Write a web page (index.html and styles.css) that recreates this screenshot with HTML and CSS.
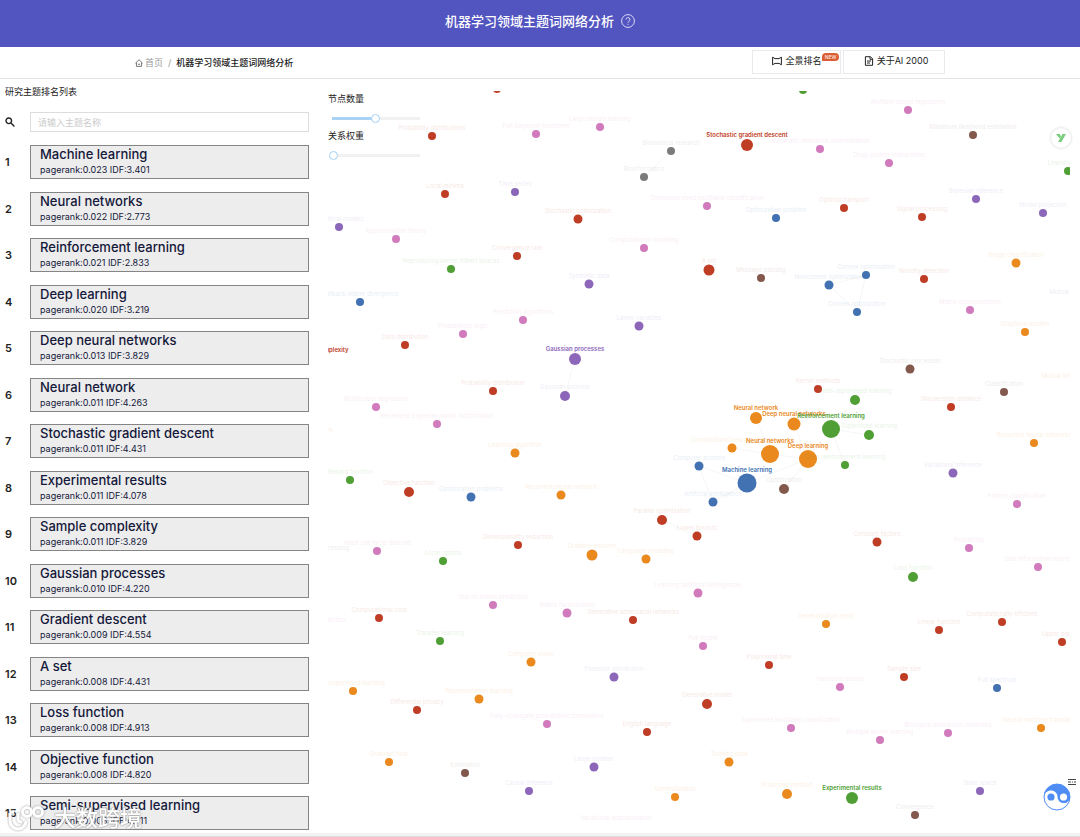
FILE: index.html
```html
<!DOCTYPE html>
<html lang="zh-CN">
<head>
<meta charset="utf-8">
<title>机器学习领域主题词网络分析</title>
<link rel="stylesheet" href="styles.css">
</head>

<body>
<header class="header">
	<h1>机器学习领域主题词网络分析</h1>
	<button type="button" class="help" aria-label="帮助">
		<svg viewBox="0 0 14 14" width="14" height="14"><circle cx="7" cy="7" r="6.4"/><path d="M5 5.6a2 2 0 1 1 2.9 1.8c-.6.3-.9.6-.9 1.3M7 9.8v1"/></svg>
	</button>
</header>
<div class="nav">
	<div class="nav-in">
		<div class="crumb">
			<svg viewBox="0 0 10 10" width="8" height="8"><path d="M.6 5.2L5 .9l4.4 4.3M1.8 4.6v4.6h6.4V4.6M3.6 6.2q1.4 1.5 2.8 0"/></svg>
			<a href="#">首页</a><span>/</span><b>机器学习领域主题词网络分析</b>
		</div>
		<div class="links">
			<a href="#" class="link-all">
				<svg viewBox="0 0 10 10" width="10" height="10"><path d="M.6 1.2L3 2.6h4l2.4-1.4v7.6L7 7.4H3L.6 8.8z"/></svg>全景排名<i class="new">NEW</i>
			</a>
			<a href="#" class="link-about">
				<svg viewBox="0 0 10 10" width="10" height="10"><path d="M1.4.7h5l2.2 2.2v6.4H1.4zM6 .7v2.6h2.6M3 5h4M3 7h3"/></svg>关于AI 2000
			</a>
		</div>
	</div>
</div>
<main class="main">
	<section class="side">
		<h2>研究主题排名列表</h2>
		<div class="search">
			<label for="key" aria-label="搜索"><svg viewBox="0 0 10 10" width="10" height="10"><circle cx="3.8" cy="3.8" r="2.8"/><path d="M6 6l3.4 3.4"/></svg></label>
			<input type="text" id="key" placeholder="请输入主题名称">
		</div>
		<ol class="list" id="list"></ol>
	</section>
	<section class="graph">
		<div class="control">
			<label for="count">节点数量</label>
			<input type="range" id="count" class="half" min="0" max="100" value="50">
			<label for="weight">关系权重</label>
			<input type="range" id="weight" min="0" max="100" value="0">
		</div>
		<svg id="net" class="net" viewBox="328 91 742 739"></svg>
	</section>
</main>
<div class="foot"></div>
<button type="button" class="plugin" aria-label="插件">
	<svg viewBox="0 0 12 10" width="12" height="10"><path d="M1 1h3.800l1.200 2.400L4.600 5.600zM7.500 1H11L6.400 9H3z"/></svg>
</button>
<button type="button" class="menu" aria-label="菜单">
	<svg viewBox="0 0 8 6" width="8" height="6"><path d="M0 .5h8M0 3h3M4 3h1M6 3h2M0 5.5h8"/></svg>
</button>
<button type="button" class="robot" aria-label="助手">
	<svg viewBox="0 0 28 28" width="28" height="28">
		<circle cx="14" cy="14" r="13" fill="#fff" stroke="#4f8df5"/>
		<path d="M1 14a13 13 0 0 1 26 0c0 4-3 6-6 6a6 6 0 0 1-6.500-6C14.500 10 11.500 7.500 8 7.500S1 10 1 14z" fill="#4f8df5"/>
		<circle cx="8" cy="14" r="3.6" fill="#4f8df5"/><circle cx="20.500" cy="14" r="3.6" fill="#fff"/>
	</svg>
</button>
<div class="mark">
	<svg viewBox="0 0 40 28" width="40" height="28"><path d="M4 9v8a8 8 0 0 0 16 0M12 9v6q0 3 4 3M4 8h4"/><circle cx="21" cy="8" r="4.500"/><circle cx="32" cy="8" r="4.500"/></svg>
	<span>大数跨境</span>
</div>
<script src="graph.js"></script>
</body>
</html>
```
FILE: styles.css
```css
*{margin:0; padding:0; box-sizing:border-box; list-style:none;}
body{min-height:100vh; display:flex; flex-direction:column; background:#fff; color:#222; font:9px/14px Inter,"Noto Sans CJK SC",sans-serif;}
a{color:inherit; text-decoration:none;}
button{border:0; background:none; cursor:pointer;}
svg{display:block; fill:none;}

.header{height:47px; display:flex; align-items:center; justify-content:center; gap:7px; padding-bottom:5px; background:#5254c0; color:#fff;}
.header h1{font-size:13px; line-height:20px; font-weight:500;}
.help svg{stroke:#dcdcf8;}

.nav{height:32px; border-bottom:1px solid #e4e4e4;}
.nav-in{width:75%; height:100%; margin:0 auto; display:flex; justify-content:space-between;}
.crumb{display:flex; align-items:center; color:#999;}
.crumb svg{stroke:#555; margin-right:2px;}
.crumb span{margin:0 5px;}
.crumb b{color:#222; font-weight:500;}
.links{display:flex; gap:2px; padding-top:3px;}
.links a{height:24px; display:flex; align-items:center; justify-content:center; gap:3px; position:relative; padding:0 0 2px 4px; border:1px solid #e9e9ee;}
.links svg{stroke:#222;}
.link-all{width:89px;}
.link-about{width:102px;}
.new{position:absolute; top:2px; right:1px; width:17px; height:8px; border-radius:4px 4px 4px 0; background:#dc5d32; color:#fff; font-size:5px; line-height:8px; font-style:normal; text-align:center;}

.main{display:flex; align-items:stretch; padding:5px 10px 0 5px;}
.side{width:304px; flex:none; display:flex; flex-direction:column;}
.side h2{font-size:9px; line-height:16px; font-weight:400;}
.search{display:flex; align-items:center; margin:12px 0 13px;}
.search label{width:25px; flex:none;}
.search svg{stroke:#222; stroke-width:1.4;}
.search input{flex:1; height:20px; padding:0 7px; border:1px solid #ddd; background:#fff; font:inherit; outline:none;}
.search input::placeholder{color:#ccc;}
.list{flex:1; display:flex; flex-direction:column; justify-content:space-between;}
.list li{display:flex; align-items:center;}
.list em{width:25px; flex:none; font-size:11px; font-style:normal; font-weight:600;}
.list a{flex:1; display:block; padding:0 9px 1px; border:1px solid #858585; background:#ededed; color:#14183a;}
.list strong{display:block; font-size:13px; line-height:16px; font-weight:500;}
.list span{display:block; font-size:9px; line-height:15px;}

.graph{flex:1; min-width:0; position:relative; margin-left:19px; padding-top:7px;}
.net{width:100%; height:auto; overflow:hidden;}
.net text{font-size:6px; text-anchor:middle;}
.net .weak{opacity:.13;}
.net .main-word{font-weight:600;}
.net line{stroke:#f0f0f0; stroke-width:.6;}
.control{position:absolute; left:0; top:8px; width:92px; display:flex; flex-direction:column;}
.control label{line-height:14px;}
.control input{-webkit-appearance:none; appearance:none; width:92px; height:9px; margin:8px 0 6px 1px; background:linear-gradient(#f1f1f1,#f1f1f1) 3px 3px/88px 3px no-repeat; outline:none;}
.control .half{background:linear-gradient(#a9d2f7,#a9d2f7) 3px 3px/44px 3px no-repeat,linear-gradient(#f1f1f1,#f1f1f1) 3px 3px/88px 3px no-repeat;}
.control input::-webkit-slider-thumb{-webkit-appearance:none; width:9px; height:9px; border:1px solid #a4d0f8; border-radius:50%; background:#fff;}

.foot{height:4px; margin-top:auto; border-bottom:1px solid #dcdcdc; background:#f1f3f3;}
.plugin{position:fixed; right:9px; top:128px; width:20px; height:20px; border-radius:50%; background:#fff; box-shadow:0 0 3px #ccc; display:flex; align-items:center; justify-content:center;}
.plugin svg{fill:#7bce7f;}
.menu{position:fixed; right:4px; bottom:52px;}
.menu svg{stroke:#444;}
.robot{position:fixed; right:9px; bottom:26px;}
.mark{position:fixed; left:6px; bottom:5px; display:flex; align-items:center; gap:8px; color:#fff; font-size:22px; line-height:26px; font-weight:500; pointer-events:none; text-shadow:0 0 2px #888,0 0 1px #999;}
.mark svg{stroke:#fff; stroke-width:3; filter:drop-shadow(0 0 1px #999);}
```
FILE: graph.js
```js
var aWord = [
	['Machine learning','0.023','3.401'],
	['Neural networks','0.022','2.773'],
	['Reinforcement learning','0.021','2.833'],
	['Deep learning','0.020','3.219'],
	['Deep neural networks','0.013','3.829'],
	['Neural network','0.011','4.263'],
	['Stochastic gradient descent','0.011','4.431'],
	['Experimental results','0.011','4.078'],
	['Sample complexity','0.011','3.829'],
	['Gaussian processes','0.010','4.220'],
	['Gradient descent','0.009','4.554'],
	['A set','0.008','4.431'],
	['Loss function','0.008','4.913'],
	['Objective function','0.008','4.820'],
	['Semi-supervised learning','0.008','4.711']
];
var oList = document.getElementById('list');
var sList = '';
for(var i=0;i<aWord.length;i++){
	sList+='<li><em>'+(i+1)+'</em><a href="#"><strong>'+aWord[i][0]+'</strong><span>pagerank:'+aWord[i][1]+' IDF:'+aWord[i][2]+'</span></a></li>';
}
oList.innerHTML = sList;

var color = {b:'#4272b1', o:'#ea891d', g:'#4f9f35', r:'#c03d25', p:'#8c67b9', n:'#84594d', k:'#d17bbd', h:'#7b7b7b'};
//x, y, 半径, 颜色, 主题词
var aNode = [
	[497,89,4,'r',''],[803,90,4,'g',''],
	[432,136,4,'r','Probability distributions'],[536,134,4,'k','Full-bayesian treatment'],[600,127,4,'k','Large margin learning'],
	[671,151,4,'h','Biomedical research'],[644,177,4,'h','Bioinformatics'],[445,194,4,'r','Local minima'],
	[515,192,4,'p','Time series'],[578,219,4.500,'r','Stochastic optimization'],[339,227,4,'p','Graphical models'],
	[396,239,4,'k','Approximation theory'],[517,256,4,'r','Convergence rate'],[451,269,4,'g','Reproducing kernel hilbert spaces'],
	[644,248,4,'k','Computational modeling'],[589,284,4.500,'p','Synthetic data'],[360,302,4,'b','Kullback-leibler divergence'],
	[523,320,4,'k','Prediction algorithms'],[639,326,4.500,'p','Latent variables'],[463,334,4,'k','Probabilistic logic'],
	[405,345,4,'r','Data distribution'],[908,110,4,'k','Multiple output regression'],[973,135,4,'n','Maximum likelihood estimation'],
	[747,145,6,'r','Stochastic gradient descent',1],[820,149,4,'k','Automatic relevance determination'],[889,163,4,'k','Drug-protein interactions'],
	[1068,171,4,'g','Learning rates'],[707,206,4,'k','Semisupervised multilabel classification'],[776,218,4,'b','Optimization problem'],
	[844,208,4,'r','Optimal transport'],[922,217,4,'r','Signal processing'],[976,199,4,'p','Bayesian inference'],[1043,213,4,'p','Model projection'],
	[709,270,5.500,'r','A set'],[761,278,4,'n','Message passing'],[866,275,4,'b','Convex optimisation'],[829,285,4.500,'b','Nonconvex optimization'],
	[857,312,4,'b','Convex optimization'],[924,279,4,'r','Novelty detection'],[1016,263,4.500,'o','Image classification'],
	[970,310,4,'k','Matrix decomposition'],[1025,332,4,'o','Graphical models'],[1076,300,4,'p','Mutual information'],
	[321,360,6,'r','Sample complexity',1],[575,359,6,'p','Gaussian processes',1],[565,396,5,'p','Gaussian process'],
	[493,391,4,'r','Probability distribution'],[376,407,4,'k','Multioutput regression'],[437,424,4,'k','Kernelized bayesian matrix factorization'],
	[515,453,4.500,'o','Learning algorithm'],[321,438,4,'o','Network'],[350,480,4,'g','Reward function'],[409,492,5,'r','Objective function'],
	[471,497,4.500,'b','Optimization problems'],[561,495,4.500,'o','Recurrent neural network'],[662,520,5,'r','Parallel optimization'],
	[697,536,4.500,'r','Lower bounds'],[518,545,4,'r','Dimensionality reduction'],[377,551,4,'k','Yeast cell cycle data set'],
	[324,556,4,'h','Image processing'],[443,561,4,'g','Local optima'],[592,555,5.500,'o','Gradient descent'],[646,559,4.500,'o','Language modeling'],
	[698,593,4.500,'k','Learning (artificial intelligence)'],
	[910,369,4.500,'n','Stochastic processes'],[1068,380,0,'o','Mutual information'],[1004,392,4,'n','Classification'],[951,407,4,'r','Wasserstein distance'],
	[818,389,4,'r','Kernel methods'],[855,400,5,'g','Semi-supervised learning'],[756,418,6,'o','Neural network',1],[794,424,6.500,'o','Deep neural networks',1],
	[831,429,9,'g','Reinforcement learning',1],[869,435,5,'g','Supervised learning'],[770,454,9,'o','Neural networks',1],[808,459,9,'o','Deep learning',1],
	[732,448,4.500,'o','Convolutional neural network'],[845,465,4,'g','Deep reinforcement learning'],[699,466,4.500,'b','Computer science'],
	[747,483,9.500,'b','Machine learning',1],[784,489,5,'n','Optimization'],[713,502,4.500,'b','Artificial intelligence'],
	[1034,443,4,'o','Recurrent neural networks'],[953,473,4.500,'p','Variational inference'],[1017,504,4,'k','Pattern classification'],
	[877,542,4.500,'r','Constant factors'],[969,548,4,'k','Probability'],[913,577,5,'g','Loss function'],[1038,567,4,'k','Side information source'],
	[493,605,4,'k','Out-of-matrix prediction'],[567,613,4.500,'k','Matrix factorization'],[379,618,4,'r','Computational cost'],
	[633,620,4,'r','Generative adversarial networks'],[440,641,4,'g','Transfer learning'],[531,662,4.500,'o','Computer vision'],
	[614,677,4.500,'p','Posterior distribution'],[353,691,4,'o','Unsupervised learning'],[479,699,4.500,'o','Representation learning'],
	[417,710,4,'r','Differential privacy'],[547,724,4,'k','Fully-conjugate probabilistic formulation'],[647,732,4,'r','English language'],
	[389,762,4,'o','Gradient flow'],[465,773,4,'n','Estimation'],[594,767,4.500,'p','Large number'],[529,791,4,'p','Causal inference'],
	[675,797,4,'o','Generalization'],[616,822,0,'k','Variational approximation'],[703,646,4,'k','Full model'],[333,624,0,'k','Statistics'],
	[826,624,4,'o','Generalization error'],[939,630,4,'r','Linear function'],[1002,622,4,'r','Computationally efficient'],
	[1062,642,4,'r','Upper bounds'],[769,665,4,'r','Polynomial time'],[904,677,4,'r','Sample size'],[840,687,4,'k','Hamming losses'],
	[997,688,4,'b','Full spectrum'],[707,704,5,'r','Generative model'],[791,728,4,'k','Supervised multilabel classification'],
	[880,740,4,'k','Multiple kernel learning'],[948,733,4,'k','Biological interaction networks'],[1041,728,4,'o','Neural machine translation'],
	[729,762,4.500,'o','Training data'],[787,794,5,'o','Proposed method'],[852,798,6,'g','Experimental results',1],
	[980,791,4,'p','State space'],[915,815,4,'n','Convergence']
];
//有关系的节点连线
var aLine = [
	[671,151,644,177],[866,275,829,285],[829,285,857,312],[866,275,857,312],[575,359,565,396],
	[756,418,770,454],[794,424,770,454],[794,424,808,459],[770,454,808,459],[732,448,770,454],
	[831,429,808,459],[831,429,855,400],[831,429,869,435],[831,429,845,465],[808,459,747,483],
	[808,459,784,489],[699,466,747,483],[699,466,713,502],[713,502,747,483],[662,520,697,536]
];
var sNet = '';
for(var i=0;i<aLine.length;i++){
	sNet+='<line x1="'+aLine[i][0]+'" y1="'+aLine[i][1]+'" x2="'+aLine[i][2]+'" y2="'+aLine[i][3]+'"/>';
}
for(var i=0;i<aNode.length;i++){
	sNet+='<circle cx="'+aNode[i][0]+'" cy="'+aNode[i][1]+'" r="'+aNode[i][2]+'" fill="'+color[aNode[i][3]]+'"/>';
}
//文字放在圆点的上面
for(var i=0;i<aNode.length;i++){
	sNet+='<text class="'+(aNode[i][5]?'main-word':'weak')+'" x="'+aNode[i][0]+'" y="'+(aNode[i][1]-aNode[i][2]-2)+'" fill="'+color[aNode[i][3]]+'">'+aNode[i][4]+'</text>';
}
document.getElementById('net').innerHTML = sNet;
```
